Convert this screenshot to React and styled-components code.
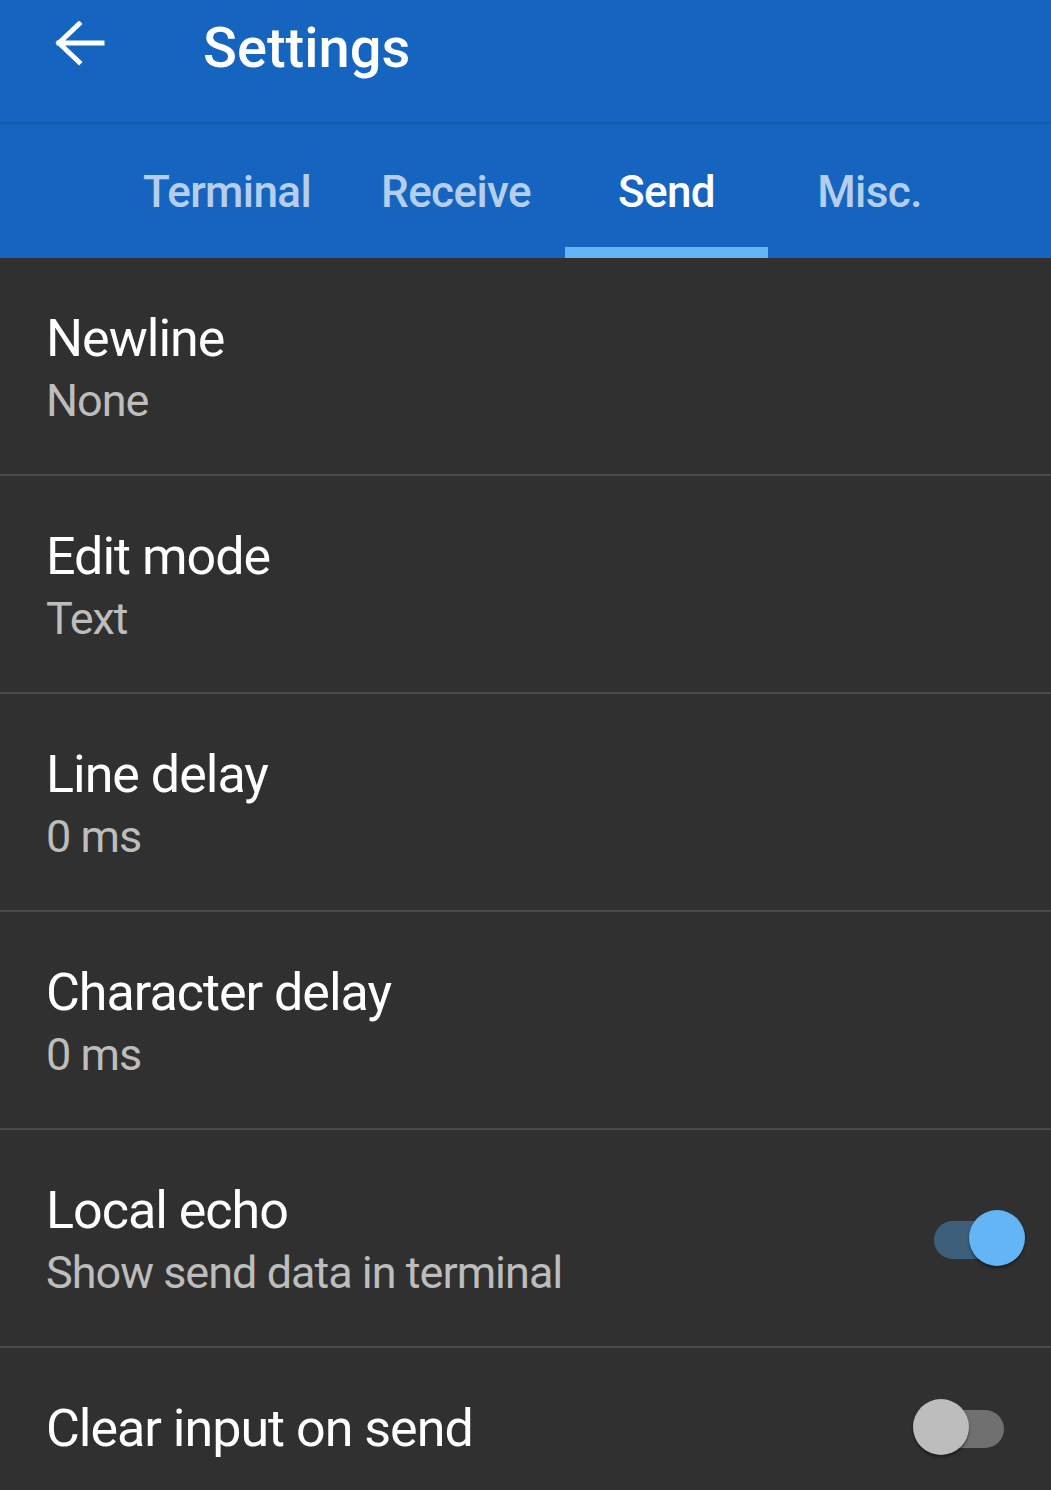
import React, { useState } from 'react'
import styled, { createGlobalStyle } from 'styled-components'

const GlobalStyle = createGlobalStyle`
    html, body {
        margin: 0;
        padding: 0;
        background: #303030;
        font-family: Roboto, "Noto Sans", "Liberation Sans", sans-serif;
    }
    * {
        box-sizing: border-box;
    }
`

const Page = styled.div`
    width: 1051px;
    height: 1490px;
    overflow: hidden;
    background: #303030;
`

const Header = styled.div`
    background: #1565c0;
`

const AppBar = styled.div`
    height: 123px;
    display: flex;
    align-items: flex-start;
    padding: 21px 0 0 55px;
    border-bottom: 1px solid rgba(0, 0, 0, 0.12);
    box-shadow: 0 1px 2px rgba(0, 0, 0, 0.1);
`

const BackButton = styled.div`
    width: 50px;
    height: 46px;
    display: flex;
    align-items: center;
    justify-content: center;
`

const Title = styled.h1`
    margin: 0 0 0 98px;
    font-size: 56px;
    font-weight: 500;
    color: #ffffff;
    line-height: 56px;
    margin-top: -1px;
`

const TabBar = styled.div`
    height: 135px;
    display: flex;
    padding-left: 107px;
`

const Tab = styled.div`
    position: relative;
    min-width: 203px;
    padding: 0 ${(p) => p.pad || 35}px;
    display: flex;
    align-items: center;
    justify-content: center;
    font-size: 44px;
    font-weight: 500;
    letter-spacing: -0.6px;
    color: ${(p) => (p.active ? '#ffffff' : 'rgba(255, 255, 255, 0.7)')};
    padding-top: 2px;
    &::after {
        content: '';
        display: ${(p) => (p.active ? 'block' : 'none')};
        position: absolute;
        left: 0;
        right: 0;
        bottom: 0;
        height: 11px;
        background: #64b5f6;
    }
`

const List = styled.div`
    display: flex;
    flex-direction: column;
`

const Row = styled.div`
    display: flex;
    align-items: center;
    padding: 50px 26px 46px 46px;
    border-bottom: 2px solid #4a4a4a;
`

const Texts = styled.div`
    flex: 1;
    display: flex;
    flex-direction: column;
    gap: 4px;
`

const RowTitle = styled.div`
    font-size: 52px;
    line-height: 62px;
    letter-spacing: -1px;
    color: #ffffff;
`

const Summary = styled.div`
    font-size: 45px;
    line-height: 54px;
    letter-spacing: -1px;
    color: #bdbdbd;
`

const SwitchBox = styled.div`
    position: relative;
    width: 112px;
    height: 60px;
    cursor: pointer;
`

const Track = styled.div`
    position: absolute;
    left: 21px;
    top: 11px;
    width: 70px;
    height: 38px;
    border-radius: 19px;
    background: ${(p) => (p.on ? '#3e5f7c' : '#707070')};
`

const Thumb = styled.div`
    position: absolute;
    top: 0;
    left: ${(p) => (p.on ? '56px' : '0')};
    width: 56px;
    height: 56px;
    border-radius: 50%;
    background: ${(p) => (p.on ? '#64b5f6' : '#bdbdbd')};
    box-shadow: 0 2px 3px rgba(0, 0, 0, 0.45);
`

const Switch = ({ on, onToggle }) => (
    <SwitchBox onClick={onToggle}>
        <Track on={on} />
        <Thumb on={on} />
    </SwitchBox>
)

const BackArrow = () => (
    <svg width="50" height="46" viewBox="0 0 50 46">
        <path
            d="M4 22 H47 M24 3 L4 22 L24 41"
            fill="none"
            stroke="#ffffff"
            strokeWidth="5"
            strokeLinecap="square"
            strokeLinejoin="miter"
        />
    </svg>
)

const tabs = [
    { label: 'Terminal', pad: 36 },
    { label: 'Receive', pad: 34 },
    { label: 'Send', pad: 35 },
    { label: 'Misc.', pad: 35 },
]

const App = () => {
    const [echo, setEcho] = useState(true)
    const [clear, setClear] = useState(false)

    return (
        <>
            <GlobalStyle />
            <Page>
                <Header>
                    <AppBar>
                        <BackButton>
                            <BackArrow />
                        </BackButton>
                        <Title>Settings</Title>
                    </AppBar>
                    <TabBar>
                        {tabs.map((t) => (
                            <Tab key={t.label} pad={t.pad} active={t.label === 'Send'}>{t.label}</Tab>
                        ))}
                    </TabBar>
                </Header>
                <List>
                    <Row>
                        <Texts>
                            <RowTitle>Newline</RowTitle>
                            <Summary>None</Summary>
                        </Texts>
                    </Row>
                    <Row>
                        <Texts>
                            <RowTitle>Edit mode</RowTitle>
                            <Summary>Text</Summary>
                        </Texts>
                    </Row>
                    <Row>
                        <Texts>
                            <RowTitle>Line delay</RowTitle>
                            <Summary>0 ms</Summary>
                        </Texts>
                    </Row>
                    <Row>
                        <Texts>
                            <RowTitle>Character delay</RowTitle>
                            <Summary>0 ms</Summary>
                        </Texts>
                    </Row>
                    <Row>
                        <Texts>
                            <RowTitle>Local echo</RowTitle>
                            <Summary>Show send data in terminal</Summary>
                        </Texts>
                        <Switch on={echo} onToggle={() => setEcho(!echo)} />
                    </Row>
                    <Row>
                        <Texts>
                            <RowTitle>Clear input on send</RowTitle>
                        </Texts>
                        <Switch on={clear} onToggle={() => setClear(!clear)} />
                    </Row>
                </List>
            </Page>
        </>
    )
}

export default App
